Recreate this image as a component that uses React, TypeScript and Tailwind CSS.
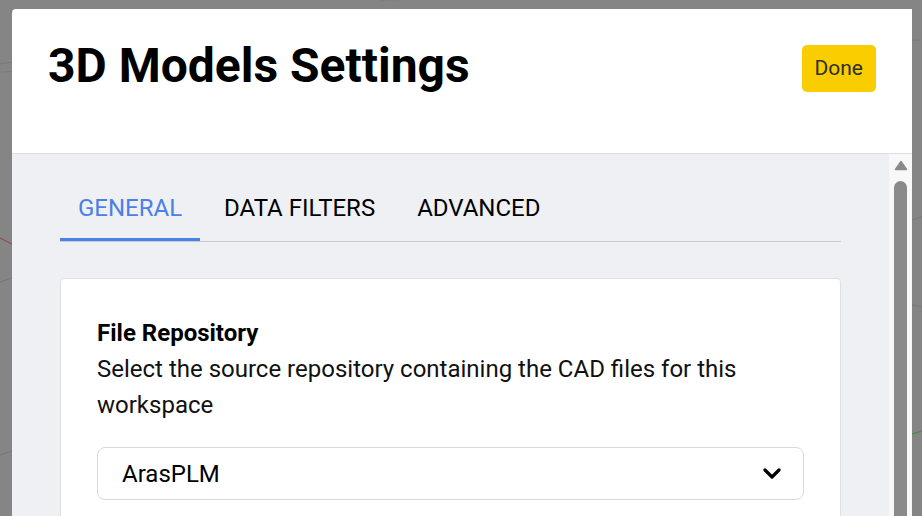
import React, { useState } from 'react';

const tabs = ['GENERAL', 'DATA FILTERS', 'ADVANCED'];

function Backdrop() {
  // faint lines of the 3D viewport behind the dialog
  return (
    <svg className="absolute inset-0" width="922" height="516">
      <line x1="0" y1="72" x2="922" y2="40" stroke="#7a7a7a" strokeWidth="1" />
      <line x1="380" y1="0" x2="922" y2="-10" stroke="#7a7a7a" strokeWidth="1" />
      <line x1="0" y1="64" x2="40" y2="58" stroke="#777" strokeWidth="1" />
      <line x1="0" y1="238" x2="12" y2="244" stroke="#8c4646" strokeWidth="1" />
      <line x1="0" y1="282" x2="12" y2="278" stroke="#777" strokeWidth="1" />
      <line x1="0" y1="455" x2="12" y2="451" stroke="#777" strokeWidth="1" />
      <line x1="912" y1="220" x2="922" y2="217" stroke="#777" strokeWidth="1" />
      <line x1="912" y1="305" x2="922" y2="307" stroke="#777" strokeWidth="1" />
      <line x1="912" y1="434" x2="922" y2="431" stroke="#3f8a3f" strokeWidth="1" />
    </svg>
  );
}

export default function App() {
  const [active, setActive] = useState(0);
  const [repo, setRepo] = useState('ArasPLM');

  return (
    <div
      className="relative w-[922px] h-[516px] overflow-hidden bg-[#858585] pt-[9px] pl-[12px]"
      style={{ fontFamily: 'Roboto, "Noto Sans", sans-serif' }}
    >
      <Backdrop />
      <div className="relative w-[900px] h-[600px] bg-white rounded-tl-[4px] flex flex-col">
        {/* Header */}
        <div className="h-[145px] shrink-0 flex items-start justify-between pl-[36px] pr-[36px] border-b border-[#dcdde2]">
          <h1 className="mt-[33px] text-[48px] leading-[48px] font-bold text-black">
            3D Models Settings
          </h1>
          <button className="mt-[36px] h-[47px] px-[13px] rounded-[5px] bg-[#f9cd00] text-[21px] text-[#2e2e2e] leading-none">
            Done
          </button>
        </div>

        {/* Body */}
        <div className="flex flex-1 bg-[#eff0f4]">
          <div className="flex-1 pt-[24px] px-[48px]">
            <div className="flex border-b border-[#c9cacf]">
              {tabs.map((t, i) => (
                <button
                  key={t}
                  onClick={() => setActive(i)}
                  className={
                    'py-[16px] text-[24px] leading-[28px] border-b-[3px] ' +
                    (i === 0 ? 'w-[140px] text-center ' : 'pl-[24px] pr-[18px] ') +
                    (active === i ? 'border-[#4a80e8] text-[#4a80e8]' : 'border-transparent text-black')
                  }
                >
                  {t}
                </button>
              ))}
            </div>

            <div className="mt-[36px] bg-white border border-[#dfe0e5] rounded-[4px] px-[36px] pt-[36px] pb-[40px]">
              <div className="text-[24px] leading-[36px] font-bold text-black">File Repository</div>
              <p className="text-[24px] leading-[36px] text-[#111]">
                Select the source repository containing the CAD files for this workspace
              </p>
              <div className="relative mt-[24px] h-[53px] border border-[#d9d9dd] rounded-[8px] flex items-center pl-[24px] pr-[22px]">
                <span className="flex-1 text-[24px] text-black">{repo}</span>
                <svg width="18" height="11" viewBox="0 0 18 11" className="shrink-0">
                  <polyline
                    points="2,2 9,9 16,2"
                    fill="none"
                    stroke="#000"
                    strokeWidth="3.2"
                    strokeLinecap="round"
                    strokeLinejoin="round"
                  />
                </svg>
                <select
                  value={repo}
                  onChange={(e) => setRepo(e.target.value)}
                  className="absolute inset-0 opacity-0 cursor-pointer"
                >
                  <option>ArasPLM</option>
                  <option>Vault</option>
                </select>
              </div>
            </div>
          </div>

          {/* Scrollbar */}
          <div className="w-[23px] shrink-0 bg-[#f8f8f8] flex flex-col items-start pl-[5px] pt-[6px]">
            <svg width="14" height="11" viewBox="0 0 14 11">
              <path d="M7 1.5 L12.5 9.5 H1.5 Z" fill="#8a8a8a" stroke="#8a8a8a" strokeWidth="1.5" strokeLinejoin="round" />
            </svg>
            <div className="mt-[10px] w-[13px] flex-1 bg-[#8a8a8a] rounded-t-full" />
          </div>
        </div>
      </div>
    </div>
  );
}
